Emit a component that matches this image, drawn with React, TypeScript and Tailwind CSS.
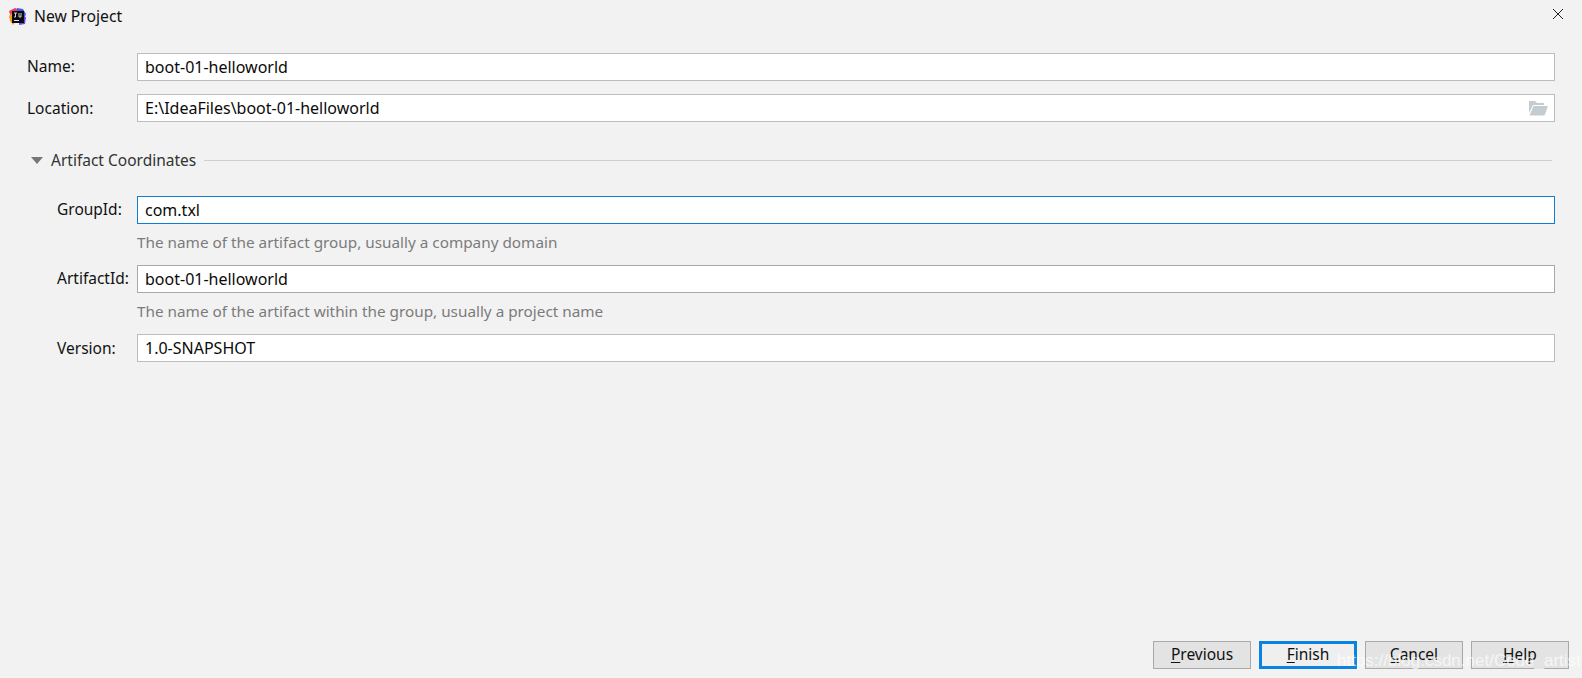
const font = "font-['Noto_Sans','Open_Sans',sans-serif]";

function Field({ value, focused, dark, icon }: { value: string; focused?: boolean; dark?: boolean; icon?: boolean }) {
  const border = focused ? "border-[#0f7fd6]" : dark ? "border-[#a9a9a9]" : "border-[#bdbdbd]";
  return (
    <div className={`flex h-[28px] flex-1 items-center justify-between border bg-white pl-[7px] pr-[6px] text-[16px] text-[#0a0a0a] ${border}`}>
      <span>{value}</span>
      {icon && (
        <svg width="20" height="15" viewBox="0 0 20 15" className="mt-[1px]">
          <path d="M1 0h6l2 2h7v2H5L1 12z" fill="#c3ccd1" />
          <path d="M5.5 5H20l-3.5 9.5H1.5z" fill="#c3ccd1" />
        </svg>
      )}
    </div>
  );
}

function Btn({ k, rest, primary }: { k: string; rest: string; primary?: boolean }) {
  return (
    <div
      className={`flex h-[28px] w-[98px] items-center justify-center text-[15.5px] text-[#111] ${
        primary ? "border-[3px] border-[#0a84e0] bg-[#efefef]" : "border border-[#a9a9a9] bg-[#e3e3e3]"
      }`}
    >
      <span>
        <span className="underline underline-offset-2">{k}</span>
        {rest}
      </span>
    </div>
  );
}

function Logo() {
  return (
    <svg width="17" height="17" viewBox="0 0 17 17">
      <path d="M0 3l6-3 5 2-3 6-6 2z" fill="#f0386b" />
      <path d="M8 0l6 1 3 5-2 5-6-5z" fill="#3f5fe8" />
      <path d="M0 8l3-3 4 8-3 4-3-4z" fill="#f59a23" />
      <path d="M10 8l7 1-1 7-6 1z" fill="#6a49e0" />
      <rect x="3" y="3" width="12" height="12" fill="#0b0b10" />
      <rect x="5" y="12" width="5" height="1" fill="#e8e8e8" />
      <path d="M5 5h3M6.5 5v4M5 9h1.5M10 5v4M10 9h2V5" stroke="#e8e8e8" strokeWidth="0.9" fill="none" />
    </svg>
  );
}

export default function App() {
  return (
    <div className={`relative flex h-[678px] w-[1582px] flex-col overflow-hidden bg-[#f2f2f2] ${font}`}>
      <div className="flex h-[33px] items-center pl-[9px] pr-[19px] text-[15.7px] text-[#111]">
        <Logo />
        <span className="ml-[8px]">New Project</span>
        <svg width="10" height="10" viewBox="0 0 10 10" className="ml-auto -mt-[5px]">
          <path d="M0 0l10 10M10 0L0 10" stroke="#222" strokeWidth="1" />
        </svg>
      </div>

      <div className="flex flex-col pl-[27px] pr-[27px] pt-[20px]">
        <div className="flex items-center">
          <span className="w-[110px] text-[15.5px] text-[#111]">Name:</span>
          <Field value="boot-01-helloworld" />
        </div>
        <div className="mt-[13px] flex items-center">
          <span className="w-[110px] pt-[1px] text-[15.5px] text-[#111]">Location:</span>
          <Field value="E:\IdeaFiles\boot-01-helloworld" icon />
        </div>

        <div className="mt-[27px] flex h-[22px] items-center">
          <svg width="12" height="7" viewBox="0 0 12 7" className="ml-[4px]">
            <path d="M0 0h12L6 7z" fill="#777" />
          </svg>
          <span className="ml-[8px] pt-[1px] text-[15.5px] text-[#333]">Artifact Coordinates</span>
          <div className="ml-2 mr-[3px] h-px flex-1 bg-[#cfcfcf]" />
        </div>

        <div className="mt-[25px] flex items-center pl-[30px]">
          <span className="w-[80px] text-[15.5px] text-[#111]">GroupId:</span>
          <Field value="com.txl" focused />
        </div>
        <div className="mb-[12px] mt-[7px] h-[22px] pl-[110px] text-[15.3px] leading-[22px] text-[#7b7b7b]">
          The name of the artifact group, usually a company domain
        </div>
        <div className="flex items-center pl-[30px]">
          <span className="w-[80px] text-[15.5px] text-[#111]">ArtifactId:</span>
          <Field value="boot-01-helloworld" dark />
        </div>
        <div className="mb-[12px] mt-[7px] h-[22px] pl-[110px] text-[15.3px] leading-[22px] text-[#7b7b7b]">
          The name of the artifact within the group, usually a project name
        </div>
        <div className="flex items-center pl-[30px]">
          <span className="w-[80px] pt-[1px] text-[15.5px] text-[#111]">Version:</span>
          <Field value="1.0-SNAPSHOT" />
        </div>
      </div>

      <div className="mt-auto flex justify-end gap-[8px] pb-[9px] pr-[13px]">
        <Btn k="P" rest="revious" />
        <Btn k="F" rest="inish" primary />
        <Btn k="C" rest="ancel" />
        <Btn k="H" rest="elp" />
      </div>

      <div className="absolute left-[1337px] top-[648px] font-['Liberation_Sans',sans-serif] text-[17px] text-white/70">
        https://blog.csdn.net/Code_artist
      </div>
    </div>
  );
}
